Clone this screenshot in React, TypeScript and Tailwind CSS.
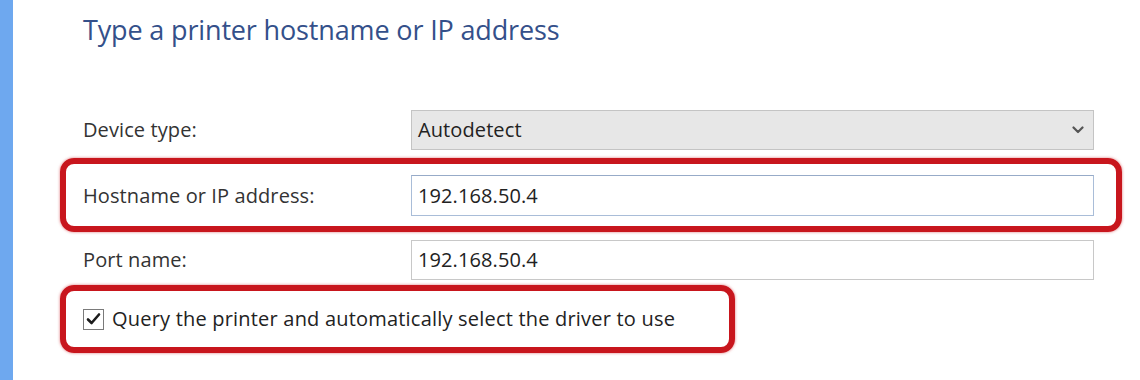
import React from "react";

const font = { fontFamily: '"Open Sans", "Noto Sans", "Liberation Sans", sans-serif' };

function Chevron() {
  return (
    <svg width="12" height="8" viewBox="0 0 12 8" className="block">
      <path d="M1.5 1.5 L6 6 L10.5 1.5" fill="none" stroke="#555" strokeWidth="2.2" strokeLinecap="round" strokeLinejoin="round" />
    </svg>
  );
}

function CheckBox() {
  return (
    <div className="w-[21px] h-[21px] border border-[#7a7a7a] bg-white flex items-center justify-center shrink-0">
      <svg width="15" height="14" viewBox="0 0 15 14">
        <path d="M2 7.5 L5.6 11 L13 2.5" fill="none" stroke="#1c1c1c" strokeWidth="2.6" strokeLinecap="round" strokeLinejoin="round" />
      </svg>
    </div>
  );
}

export default function App() {
  return (
    <div className="w-[1140px] h-[380px] flex bg-white overflow-hidden" style={font}>
      <div className="w-[13px] h-full bg-[#6ea8ef] shrink-0" />
      <div className="flex-1 h-full pl-[70px] pr-[36px] flex flex-col">
        <div className="pt-[10px] h-[110px] text-[27px] leading-[40px] text-[#34508a] tracking-[-0.15px]">
          Type a printer hostname or IP address
        </div>

        <div className="flex items-center h-[40px] text-[20px] tracking-[0.1px] text-[#333]">
          <div className="w-[328px] shrink-0">Device type:</div>
          <div className="w-[683px] h-[40px] bg-[#e7e7e7] border border-[#c4c4c4] flex items-center justify-between pl-[6px] pr-[9px]">
            <span className="text-[#222]">Autodetect</span>
            <Chevron />
          </div>
        </div>

        <div className="mt-[8px] -ml-[23px] w-[1062px] h-[74px] border-[6px] border-[#c8161d] rounded-[14px] pl-[17px] pt-[11px] shadow-[0_0_3px_rgba(200,22,29,0.6)]">
          <div className="flex items-center h-[41px] text-[20px] tracking-[0.1px] text-[#333]">
            <div className="w-[328px] shrink-0">Hostname or IP address:</div>
            <div className="w-[683px] h-[41px] bg-white border border-[#a9bdd8] border-t-[#97abc8] flex items-center pl-[6px] text-[#222]">
              192.168.50.4
            </div>
          </div>
        </div>

        <div className="mt-[8px] flex items-center h-[40px] text-[20px] tracking-[0.1px] text-[#333]">
          <div className="w-[328px] shrink-0">Port name:</div>
          <div className="w-[683px] h-[40px] bg-white border border-[#c8c8c8] flex items-center pl-[6px] text-[#222]">
            192.168.50.4
          </div>
        </div>

        <div className="mt-[5px] -ml-[23px] w-[675px] h-[68px] border-[6px] border-[#c8161d] rounded-[14px] pl-[17px] flex items-center shadow-[0_0_3px_rgba(200,22,29,0.6)]">
          <div className="flex items-center gap-[8px] text-[20px] tracking-[0.2px] text-[#222]">
            <CheckBox />
            <span>Query the printer and automatically select the driver to use</span>
          </div>
        </div>
      </div>
      <div className="w-[10px] h-full bg-[#6ea8ef] shrink-0" />
    </div>
  );
}
